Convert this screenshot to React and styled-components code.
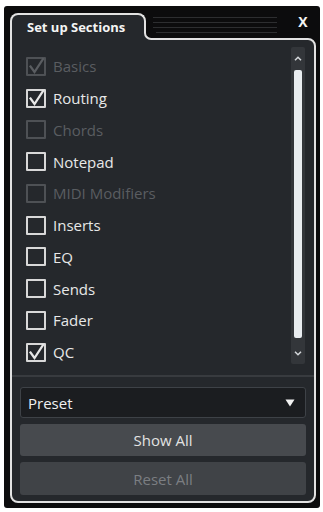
import React from "react";
import styled, { createGlobalStyle } from "styled-components";

const Global = createGlobalStyle`
  * { box-sizing: border-box; }
  body {
    margin: 0;
    background: #ffffff;
    font-family: "Open Sans", "Noto Sans", sans-serif;
  }
`;

const BLACK = "#0c0c0d";
const PANEL = "#25282c";
const LINE = "#e2e2e2";

const Window = styled.div`
  margin: 6px 0 0 4px;
  width: 316px;
  height: 502px;
  background: ${BLACK};
  border-radius: 3px;
  padding: 7px 4px 5px 6px;
  display: flex;
  flex-direction: column;
`;

const Header = styled.div`
  display: flex;
  align-items: stretch;
  height: 27px;
  margin-bottom: -2px;
  position: relative;
  z-index: 1;
`;

const Tab = styled.div`
  position: relative;
  width: 136px;
  border: 2px solid ${LINE};
  border-bottom: 0;
  border-radius: 8px 8px 0 0;
  background: ${PANEL};
  color: #f4f4f4;
  font-weight: 700;
  font-size: 13px;
  padding: 0 0 2px 15px;
  display: flex;
  align-items: center;
  white-space: nowrap;
  &::before {
    content: "";
    position: absolute;
    left: 100%;
    bottom: 0;
    width: 10px;
    height: 10px;
    background: ${PANEL};
  }
  &::after {
    content: "";
    position: absolute;
    left: 100%;
    bottom: 0;
    width: 10px;
    height: 10px;
    border-left: 2px solid ${LINE};
    border-bottom: 2px solid ${LINE};
    border-bottom-left-radius: 7px;
    background: ${BLACK};
  }
`;

const Grip = styled.div`
  flex: 1;
  display: flex;
  flex-direction: column;
  gap: 4px;
  padding: 4px 14px 0 7px;
`;

const GripLine = styled.div`
  height: 1px;
  background: #2d2e30;
`;

const Close = styled.div`
  align-self: flex-start;
  width: 24px;
  height: 18px;
  margin-right: 1px;
  line-height: 18px;
  text-align: center;
  color: #f4f4f4;
  font-weight: 700;
  font-size: 14px;
`;

const Panel = styled.div`
  flex: 1;
  border: 2px solid ${LINE};
  border-radius: 0 8px 8px 8px;
  background: ${PANEL};
  display: flex;
  flex-direction: column;
`;

const ListArea = styled.div`
  display: flex;
  align-items: flex-start;
  height: 337px;
  border-bottom: 2px solid #383b3f;
  padding: 7px 9px 0 14px;
`;

const Items = styled.div`
  flex: 1;
  display: flex;
  flex-direction: column;
  padding-top: 3.5px;
`;

const Row = styled.div`
  height: 31.75px;
  display: flex;
  align-items: center;
  gap: 7px;
  font-size: 15px;
  color: ${(p) => (p.$disabled ? "#5a5d61" : "#e8e8e8")};
`;

const Box = styled.div`
  position: relative;
  width: 20px;
  height: 19px;
  flex: none;
  border: 2px solid ${(p) => (p.$disabled ? "#4e5155" : "#d8d8d8")};
  border-radius: 1px;
  svg {
    position: absolute;
    left: -2px;
    top: -2px;
  }
`;

const Scrollbar = styled.div`
  width: 14px;
  height: 317px;
  background: #33363a;
  border-radius: 2px;
  display: flex;
  flex-direction: column;
  align-items: center;
  padding: 2px 0;
`;

const Arrow = styled.div`
  height: 18px;
  display: flex;
  align-items: center;
  justify-content: center;
`;

const Thumb = styled.div`
  flex: 1;
  width: 8px;
  margin: 3px 0 6px;
  background: #e9edf0;
  border-radius: 2px;
`;

const Bottom = styled.div`
  flex: 1;
  display: flex;
  flex-direction: column;
  gap: 6px;
  padding: 10px 8px 6px 8px;
`;

const Select = styled.div`
  height: 31px;
  display: flex;
  align-items: center;
  justify-content: space-between;
  padding: 0 10px 0 7px;
  background: #1b1d20;
  border: 1px solid #3e4247;
  border-radius: 3px;
  color: #f0f0f0;
  font-size: 15px;
`;

const Button = styled.div`
  height: ${(p) => p.$h}px;
  display: flex;
  align-items: center;
  justify-content: center;
  background: ${(p) => (p.$disabled ? "#404347" : "#474a4e")};
  border-radius: 3px;
  color: ${(p) => (p.$disabled ? "#7b7e82" : "#e2e2e2")};
  font-size: 15px;
`;

const Check = () => (
  <svg width="20" height="19" viewBox="0 0 20 19">
    <path
      d="M4.5 9.5 L8.5 15 L17 2"
      fill="none"
      stroke="currentColor"
      strokeWidth="2.2"
      strokeLinecap="square"
    />
  </svg>
);

const items = [
  { label: "Basics", checked: true, disabled: true },
  { label: "Routing", checked: true },
  { label: "Chords", disabled: true },
  { label: "Notepad" },
  { label: "MIDI Modifiers", disabled: true },
  { label: "Inserts" },
  { label: "EQ" },
  { label: "Sends" },
  { label: "Fader" },
  { label: "QC", checked: true },
];

export default function App() {
  return (
    <>
      <Global />
      <Window>
        <Header>
          <Tab>Set up Sections</Tab>
          <Grip>
            <GripLine />
            <GripLine />
            <GripLine />
            <GripLine />
          </Grip>
          <Close>X</Close>
        </Header>
        <Panel>
          <ListArea>
            <Items>
              {items.map((it) => (
                <Row key={it.label} $disabled={it.disabled}>
                  <Box $disabled={it.disabled}>{it.checked && <Check />}</Box>
                  {it.label}
                </Row>
              ))}
            </Items>
            <Scrollbar>
              <Arrow>
                <svg width="8" height="5" viewBox="0 0 8 5">
                  <path d="M1 4.2 L4 1.2 L7 4.2" fill="none" stroke="#d4d7da" strokeWidth="1.5" />
                </svg>
              </Arrow>
              <Thumb />
              <Arrow>
                <svg width="8" height="5" viewBox="0 0 8 5">
                  <path d="M1 0.8 L4 3.8 L7 0.8" fill="none" stroke="#d4d7da" strokeWidth="1.5" />
                </svg>
              </Arrow>
            </Scrollbar>
          </ListArea>
          <Bottom>
            <Select>
              Preset
              <svg width="10" height="8" viewBox="0 0 10 8">
                <path d="M0.5 0.5 H9.5 L5 7.5 Z" fill="#f2f2f2" />
              </svg>
            </Select>
            <Button $h={32}>Show All</Button>
            <Button $h={33} $disabled>
              Reset All
            </Button>
          </Bottom>
        </Panel>
      </Window>
    </>
  );
}
